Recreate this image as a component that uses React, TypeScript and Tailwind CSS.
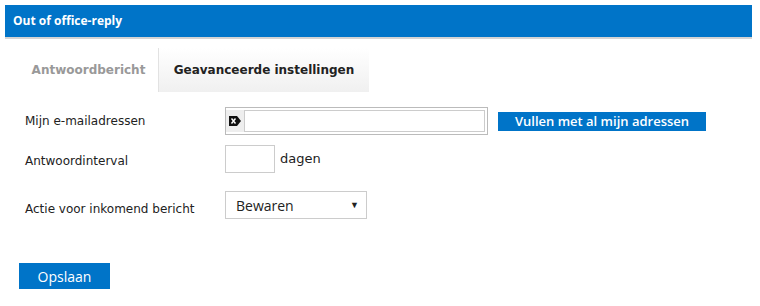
import React from "react";

const ClearIcon: React.FC = () => (
  <svg width="12" height="10" viewBox="0 0 12 10">
    <path d="M0 0 H8 L12 5 L8 10 H0 Z" fill="#111" />
    <path d="M2.5 2.5 L6.5 7.5 M6.5 2.5 L2.5 7.5" stroke="#fff" strokeWidth="1.4" />
  </svg>
);

const labelFont = { fontFamily: "'DejaVu Sans', Verdana, sans-serif" };
const uiFont = { fontFamily: "'Open Sans', sans-serif" };

const App: React.FC = () => {
  return (
    <div className="h-[306px] w-[760px] bg-white" style={labelFont}>
      <div className="pl-[5px] pr-[8px] pt-[5px]">
        <div
          className="flex h-[32px] items-center bg-[#0074c8] px-[8px] text-[12px] font-bold text-white"
          style={uiFont}
        >
          Out of office-reply
        </div>
        <div className="h-[2px] bg-[#d4d4d4]" />
      </div>

      <div className="mt-[9px] flex pl-[19px]">
        <div className="flex h-[44px] w-[139px] items-center justify-center text-[12px] font-bold text-[#999]">
          Antwoordbericht
        </div>
        <div className="flex h-[44px] w-[211px] items-center justify-center border-l border-[#e2e2e2] bg-gradient-to-b from-white to-[#f0f0f0] text-[12px] font-bold text-[#222]">
          Geavanceerde instellingen
        </div>
      </div>

      <div className="mt-[15px] flex flex-col pl-[25px] text-[12px] text-[#222]">
        <div className="flex h-[28px] items-center">
          <span className="w-[200px]">Mijn e-mailadressen</span>
          <div className="flex h-[28px] w-[263px] border border-[#bbb] p-[2px] pl-0">
            <div className="flex w-[18px] items-center justify-center bg-[#eee]">
              <ClearIcon />
            </div>
            <div className="flex-1 border border-[#ccc] bg-white" />
          </div>
          <button className="ml-[10px] h-[19px] w-[208px] bg-[#0074c8] text-[13px] font-semibold text-white" style={uiFont}>
            Vullen met al mijn adressen
          </button>
        </div>

        <div className="mt-[10px] flex h-[28px] items-center">
          <span className="w-[200px] pt-[3px]">Antwoordinterval</span>
          <div className="h-[28px] w-[50px] border border-[#ccc]" />
          <span className="ml-[5px] text-[13px]">dagen</span>
        </div>

        <div className="mt-[18px] flex h-[28px] items-center">
          <span className="w-[200px] pt-[8px]">Actie voor inkomend bericht</span>
          <div
            className="flex h-[28px] w-[142px] items-center justify-between border border-[#ccc] pl-[10px] pr-[7px] text-[14px]"
            style={uiFont}
          >
            <span>Bewaren</span>
            <span className="text-[9px]">▼</span>
          </div>
        </div>
      </div>

      <div className="mt-[44px] pl-[19px]">
        <button className="h-[26px] w-[91px] bg-[#0074c8] text-[14px] text-white" style={uiFont}>
          Opslaan
        </button>
      </div>
    </div>
  );
};

export default App;
